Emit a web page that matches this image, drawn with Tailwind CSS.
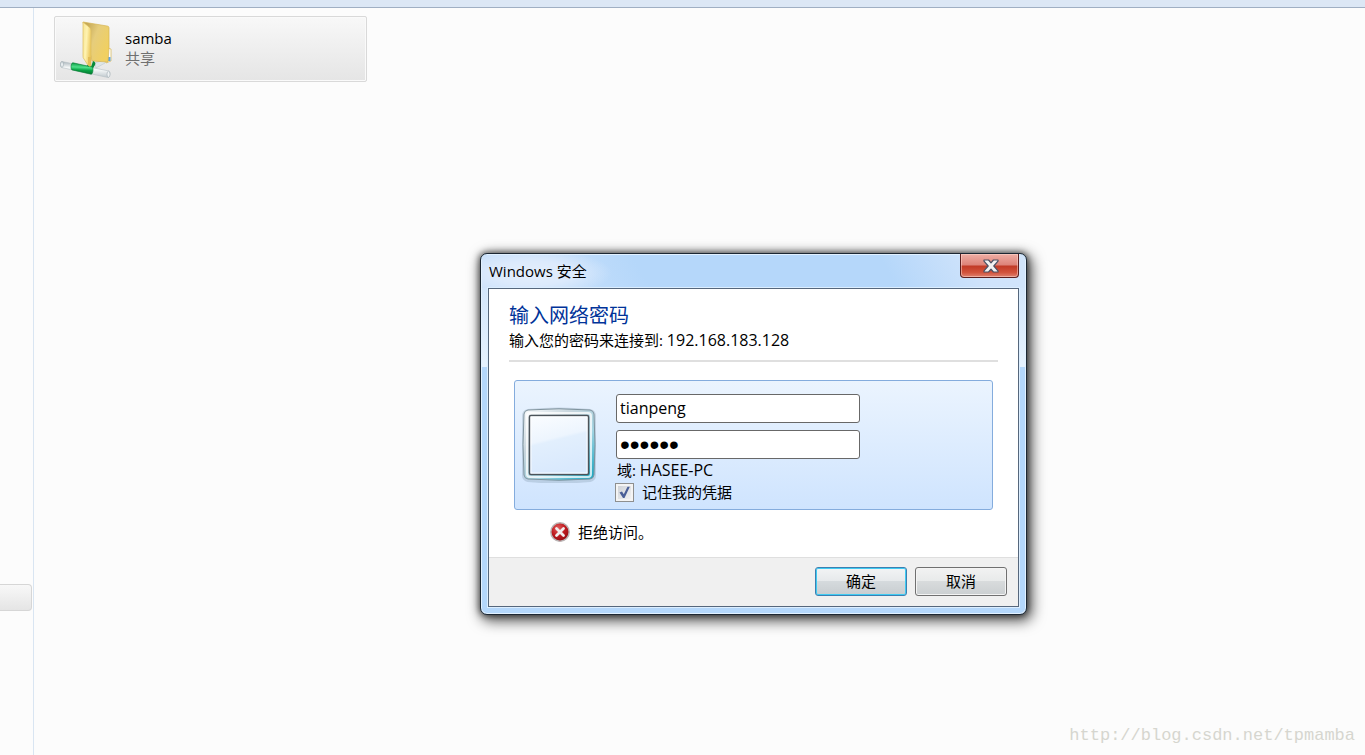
<!DOCTYPE html>
<html lang="zh-CN" class="h-full">
<head>
    <meta charset="UTF-8">
    <meta name="viewport" content="width=device-width, initial-scale=1.0">
    <title>Windows 安全</title>
    <script src="https://cdn.jsdelivr.net/npm/@tailwindcss/browser@4"></script>
</head>
<body class="relative flex h-full flex-col overflow-hidden bg-[#fcfcfc] font-['Open_Sans','Noto_Sans_CJK_SC',sans-serif] text-[15px] leading-5 text-black">

<header class="h-2 shrink-0 border-b border-[#a0afc3] bg-[#dce7f5]"></header>

<div class="flex flex-1">
    <!-- Navigation pane -->
    <nav class="flex w-[34px] flex-col border-r border-[#d9e5f2]">
        <div class="mt-[576px] mr-px h-[27px] rounded-r-sm border border-l-0 border-[#d6d6d6] bg-linear-to-b from-[#f8f8f8] to-[#e5e5e5]"></div>
    </nav>

    <!-- Shared folders -->
    <main class="flex-1 px-5 pt-2">
        <a href="#" class="flex h-[66px] w-[313px] items-center rounded-xs border border-[#d9d9d9] bg-linear-to-b from-[#f8f8f8] to-[#e5e5e5] pl-[5px] shadow-[inset_0_0_0_1px_#fafafa]">
            <svg class="h-[60px] w-[56px] shrink-0" viewBox="0 0 56 60" aria-hidden="true">
                <defs>
                    <linearGradient id="leaf" x1="0" x2="1" y1="0" y2="0.4">
                        <stop offset="0" stop-color="#f6e394"/>
                        <stop offset="0.5" stop-color="#fff3b0"/>
                        <stop offset="1" stop-color="#ecc960"/>
                    </linearGradient>
                    <linearGradient id="back" x1="0" x2="1" y1="0" y2="0.6">
                        <stop offset="0" stop-color="#b89a48"/>
                        <stop offset="0.5" stop-color="#e6cd7c"/>
                        <stop offset="1" stop-color="#f1d060"/>
                    </linearGradient>
                    <linearGradient id="plug" x1="0.1" x2="0" y1="0" y2="1">
                        <stop offset="0" stop-color="#0c9a43"/>
                        <stop offset="0.35" stop-color="#4fe08a"/>
                        <stop offset="0.6" stop-color="#08a344"/>
                        <stop offset="1" stop-color="#056b2c"/>
                    </linearGradient>
                    <linearGradient id="tube" x1="0.1" x2="0" y1="0" y2="1">
                        <stop offset="0" stop-color="#a9b4ba"/>
                        <stop offset="0.4" stop-color="#fbfdfd"/>
                        <stop offset="1" stop-color="#b3bec4"/>
                    </linearGradient>
                </defs>
                <path d="M35 44l11-4-1 4-9 5z" fill="#dfe6e9" stroke="#bcc7cc" stroke-width="0.6"/>
                <path d="M47 29l4 1v12l-5 2z" fill="#fff" stroke="#d9bc63" stroke-width="0.8"/>
                <path d="M48 38h2.500v4H48z" fill="#5ea5e5"/>
                <path d="M23 3l24 4c1.500.2 2 .8 2 2V29l-1 14-16-1z" fill="url(#back)" stroke="#d6b455" stroke-width="0.7"/>
                <path d="M23 3l6 5c1.300 1 2 2 2 4v35c0 2-1 2-2 1l-5-8c-.8-.9-1-1.600-1-3z" fill="url(#leaf)" stroke="#ddbd5d" stroke-width="0.7"/>
                <path d="M2 42.500l47 9.500c1.500.4 1 7-1 6.500L1.500 48.500C0 48 .3 42.200 2 42.500z" fill="url(#tube)" stroke="#b5c0c5" stroke-width="0.6"/>
                <ellipse cx="2" cy="45.500" rx="1.400" ry="2.800" fill="#eef2f4" stroke="#93a2aa" stroke-width="0.6"/>
                <ellipse cx="48.500" cy="55.200" rx="1.500" ry="3" fill="#eef2f4" stroke="#a1adb3" stroke-width="0.6"/>
                <path d="M27 46l4 2 2-6c2.500.8 2.800 2.500 2 4l-3 5-6-1z" fill="#078a3a"/>
                <path d="M13 43.800l19 4.200c1.800.6 1 7.600-1 7.200l-19-4.300c-1.700-.6-1-7.500 1-7.100z" fill="url(#plug)" stroke="#067a33" stroke-width="0.6"/>
                <path d="M28 38v8l2 2 1-4v-6z" fill="#e3bd58"/>
            </svg>
            <span class="flex flex-col pb-0.5 pl-[9px]">
                <span class="leading-5">samba</span>
                <span class="leading-5 text-[#707070]">共享</span>
            </span>
        </a>
    </main>
</div>

<p class="absolute right-[10px] bottom-[7px] font-['Liberation_Mono',monospace] text-[17px] leading-6 text-[#d6d6cf]">http://blog.csdn.net/tpmamba</p>

<!-- Credential window -->
<section role="dialog" aria-labelledby="caption" class="absolute top-[253px] left-[480px] w-[547px] rounded-[7px] border border-[#1c2733] bg-[#b4d7fb] px-[7px] pb-[7px] shadow-[inset_0_0_0_1px_#e2f1ff,0_0_6px_1px_rgba(0,0,0,0.55),3px_4px_14px_2px_rgba(0,0,0,0.65)]">
    <div class="absolute inset-x-px top-px h-[112px] rounded-t-[5px] bg-linear-to-b from-[#cbe1fa] to-[#e6f2fe]"></div>
    <div class="absolute inset-x-px top-px h-[33px] rounded-t-[5px] bg-[radial-gradient(ellipse_80px_24px_at_50px_18px,#e4effc_0%,#dceafc_50%,transparent_100%),linear-gradient(60deg,#cbe1fb_0%,#c3defb_16%,#b5d7fa_30%,#b5d7fa_74%,#cfe3fb_90%,#d2e5fb_100%)]"></div>

    <header class="relative flex h-[34px] items-start justify-between">
        <h1 id="caption" class="pt-[7px] pl-px leading-5">Windows 安全</h1>
        <button type="button" aria-label="关闭" class="flex h-6 w-[59px] items-center justify-center rounded-b-[4px] border border-t-0 border-[#5b1f1f] bg-[linear-gradient(#efaea5_0%,#dd8378_48%,#c13a26_52%,#d2533c_80%,#df8170_100%)] pl-0.5 shadow-[inset_0_0_0_1px_rgba(255,220,210,0.5)]">
            <svg class="h-[14px] w-[16px]" viewBox="0 0 16 14" aria-hidden="true">
                <path d="M1 1h4.600L8 3.800 10.400 1H15v1.200L10.800 7l4.200 4.800V13h-4.600L8 10.200 5.600 13H1v-1.200L5.200 7 1 2.200z" fill="#f2f2f2" stroke="#4b5063" stroke-width="1.200" stroke-linejoin="round"/>
            </svg>
        </button>
    </header>

    <form class="relative border border-[#56677c] bg-white shadow-[0_0_0_1px_#dceeff]">
        <div class="px-5 pt-[15px]">
            <h2 class="text-xl leading-6 text-[#003399]">输入网络密码</h2>
            <p class="mt-0.5 border-b-2 border-[#dfdfdf] pb-2.5">输入您的密码来连接到: <span class="text-base leading-5">192.168.183.128</span></p>

            <div class="mx-[5px] mt-[18px] flex h-[130px] rounded-[3px] border border-[#84acdd] bg-linear-to-b from-[#ebf4fe] to-[#cfe4fe] pt-[13px] pl-[7px]">
                <svg class="mt-[13px] h-[76px] w-[74px] shrink-0" viewBox="0 0 74 76" aria-hidden="true">
                    <defs>
                        <linearGradient id="rim" x1="0" x2="0.9" y1="0" y2="1">
                            <stop offset="0" stop-color="#fbfcfd"/>
                            <stop offset="0.35" stop-color="#c7d5dd"/>
                            <stop offset="0.65" stop-color="#a3d4e2"/>
                            <stop offset="1" stop-color="#1faac5"/>
                        </linearGradient>
                        <linearGradient id="pane" x1="0" x2="0.25" y1="0" y2="1">
                            <stop offset="0" stop-color="#fbfdff"/>
                            <stop offset="0.45" stop-color="#edf5fe"/>
                            <stop offset="0.5" stop-color="#e2effd"/>
                            <stop offset="1" stop-color="#d9e9fd"/>
                        </linearGradient>
                    </defs>
                    <path d="M6 4q31-3 62 0 4 1 4 5 1 29 0 59 0 4-4 5-31 3-62 0-4-1-4-5-1-30 0-59 0-4 4-5z" fill="none" stroke="#6d8597" stroke-opacity="0.25" stroke-width="4"/>
                    <path d="M6 3q31-2.500 62 0 3.500.5 4 4 2 31 0 61-.5 3.500-4 4-31 2.500-62 0-3.500-.5-4-4-2-30 0-61 .5-3.500 4-4z" fill="url(#rim)" stroke="#7f939e" stroke-width="1"/>
                    <rect x="5" y="6" width="64" height="64" rx="3" fill="none" stroke="#fff" stroke-opacity="0.75" stroke-width="2"/>
                    <rect x="7.500" y="8.500" width="59" height="59" rx="1.500" fill="url(#pane)" stroke="#4c5359" stroke-width="1.600"/>
                    <rect x="9" y="10" width="56" height="56" fill="none" stroke="#fff" stroke-opacity="0.8"/>
                </svg>
                <div class="flex flex-col items-start pl-5">
                    <input type="text" aria-label="用户名" value="tianpeng" class="h-[29px] w-[244px] rounded-[3px] border border-[#686868] bg-white px-[3px] pb-0.5 text-base leading-5 outline-none">
                    <input type="password" aria-label="密码" value="123456" class="mt-[7px] h-[29px] w-[244px] rounded-[3px] border border-[#686868] bg-white px-[3px] font-['Liberation_Sans',sans-serif] text-[28px] leading-5 outline-none">
                    <p class="mt-px pl-px">域: <span class="text-base leading-5">HASEE-PC</span></p>
                    <label class="mt-0.5 -ml-px flex h-5 items-center gap-2">
                        <span class="relative flex">
                            <input type="checkbox" checked class="size-[19px] appearance-none border border-[#8e8f8f] bg-linear-to-br from-[#cbcfd5] to-[#f6f6f6] shadow-[inset_0_0_0_2px_#f4f4f4]">
                            <svg class="pointer-events-none absolute top-0 left-0 size-[19px]" viewBox="0 0 19 19" aria-hidden="true">
                                <path d="M4.500 9.500L7 8.500l1.800 2.800 3.700-7.500h2.300L9.500 15H8z" fill="#4a5f97"/>
                            </svg>
                        </span>
                        记住我的凭据
                    </label>
                </div>
            </div>

            <div role="alert" class="flex h-[47px] items-center gap-2 pb-1 pl-[41px]">
                <svg class="size-5 shrink-0" viewBox="0 0 20 20" aria-hidden="true">
                    <defs>
                        <radialGradient id="ball" cx="0.4" cy="0.3" r="0.75">
                            <stop offset="0" stop-color="#e25f5f"/>
                            <stop offset="0.5" stop-color="#bf1b20"/>
                            <stop offset="1" stop-color="#8e0a10"/>
                        </radialGradient>
                    </defs>
                    <circle cx="10" cy="10" r="9.200" fill="url(#ball)" stroke="#b9b4b4" stroke-width="1.500"/>
                    <path d="M6.500 6.500l7 7m0-7l-7 7" stroke="#f1eded" stroke-width="2.800" stroke-linecap="round"/>
                </svg>
                拒绝访问。
            </div>
        </div>

        <footer class="flex justify-end gap-2 border-t border-[#dfdfdf] bg-[#f0f0f0] pt-[9px] pr-[11px] pb-2.5">
            <button type="submit" class="h-[29px] w-[92px] rounded-[3px] border border-[#3c7fb1] bg-[linear-gradient(#f2f4f5_0%,#e6e9eb_48%,#d5dadd_50%,#c8cdd0_100%)] pb-0.5 leading-5 shadow-[inset_0_0_0_1px_#3fcbf2]">确定</button>
            <button type="button" class="h-[29px] w-[92px] rounded-[3px] border border-[#707070] bg-[linear-gradient(#f2f2f2_0%,#e8eaea_48%,#d8dbdc_50%,#cbcfd1_100%)] pb-0.5 leading-5 shadow-[inset_0_0_0_1px_#f4f4f4]">取消</button>
        </footer>
    </form>
</section>

</body>
</html>
